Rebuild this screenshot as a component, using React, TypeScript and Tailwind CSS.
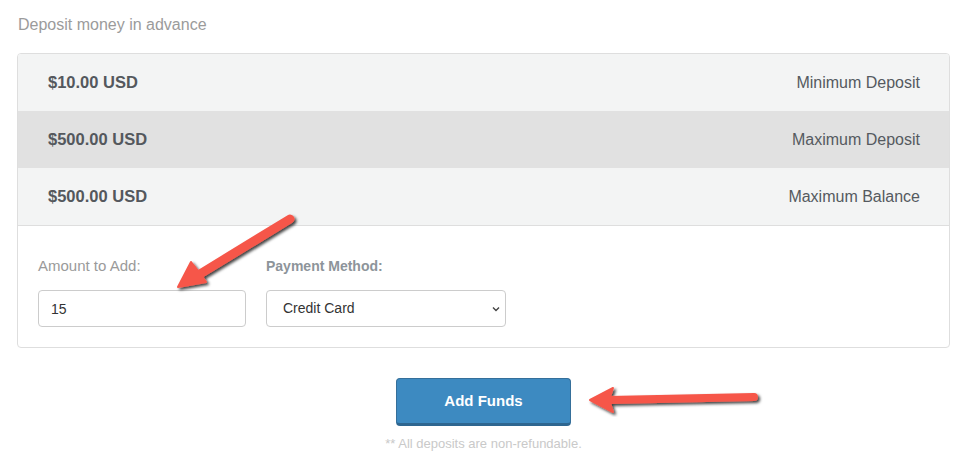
const limits = [
  { amount: "$10.00 USD", label: "Minimum Deposit", bg: "bg-[#f3f4f4]" },
  { amount: "$500.00 USD", label: "Maximum Deposit", bg: "bg-[#e1e1e1]" },
  { amount: "$500.00 USD", label: "Maximum Balance", bg: "bg-[#f3f4f4]" },
];

const Arrows = () => {
  return (
    <svg
      className="absolute inset-0 pointer-events-none"
      width="970"
      height="459"
      viewBox="0 0 970 459"
    >
      <defs>
        <filter id="arrowShadow" x="-20%" y="-20%" width="140%" height="140%">
          <feDropShadow dx="2" dy="2" stdDeviation="1.6" floodColor="#000" floodOpacity="0.75" />
        </filter>
      </defs>
      {/* arrow pointing at the amount input */}
      <g filter="url(#arrowShadow)" fill="#f6574a" stroke="#f6574a">
        <line x1="290" y1="219" x2="200" y2="274" strokeWidth="9" strokeLinecap="round" />
        <polygon points="178,287 191,262 199,272 206,282" strokeWidth="2" strokeLinejoin="round" />
      </g>
      {/* arrow pointing at the button */}
      <g filter="url(#arrowShadow)" fill="#f6574a" stroke="#f6574a">
        <line x1="754" y1="397" x2="610" y2="400" strokeWidth="8" strokeLinecap="round" />
        <polygon points="590,400 613,388 609,400 613,412" strokeWidth="2" strokeLinejoin="round" />
      </g>
    </svg>
  );
};

const App = () => {
  return (
    <div className="relative w-[970px] h-[459px] bg-white font-['Liberation_Sans',Arial,sans-serif] pl-[17px] pr-[20px] pt-[15px] overflow-hidden">
      <p className="text-[16px] leading-[20px] text-[#9b9b9b] pl-px">Deposit money in advance</p>

      {/* limits + form card */}
      <div className="mt-[18px] border border-[#dedede] rounded-[4px] overflow-hidden">
        {limits.map((row) => (
          <div
            key={row.label}
            className={`${row.bg} h-[57px] flex items-center justify-between pl-[30px] pr-[29px]`}
          >
            <span className="text-[16.5px] font-bold text-[#54585d]">{row.amount}</span>
            <span className="text-[16px] text-[#555a5f]">{row.label}</span>
          </div>
        ))}
        <div className="border-t border-[#dedede] px-[20px] pt-[30px] pb-[20px] flex gap-[20px]">
          <div className="flex flex-col">
            <label className="text-[15px] leading-[20px] text-[#9a9a9a]">Amount to Add:</label>
            <input
              defaultValue="15"
              className="mt-[14px] w-[208px] h-[37px] border border-[#cccccc] rounded-[4px] px-[12px] text-[14px] text-[#333] outline-none"
            />
          </div>
          <div className="flex flex-col">
            <label className="text-[14px] leading-[20px] font-bold text-[#8d949a]">Payment Method:</label>
            <div className="relative mt-[14px] w-[240px] h-[37px] border border-[#cccccc] rounded-[4px] flex items-center px-[16px] text-[14px] text-[#333]">
              Credit Card
              <svg className="absolute right-[5px] top-[15px]" width="8" height="6" viewBox="0 0 8 6">
                <path d="M1 1.5 L4 4.5 L7 1.5" fill="none" stroke="#444" strokeWidth="1.4" />
              </svg>
            </div>
          </div>
        </div>
      </div>

      {/* submit */}
      <div className="flex flex-col items-center mt-[30px]">
        <button className="w-[175px] h-[48px] bg-[#3d8ac1] border border-[#356f9a] border-b-[3px] border-b-[#2e6690] rounded-[4px] text-white text-[15px] font-bold">
          Add Funds
        </button>
        <p className="mt-[8px] text-[13px] text-[#c9c9c9]">** All deposits are non-refundable.</p>
      </div>

      <Arrows />
    </div>
  );
};

export default App;
